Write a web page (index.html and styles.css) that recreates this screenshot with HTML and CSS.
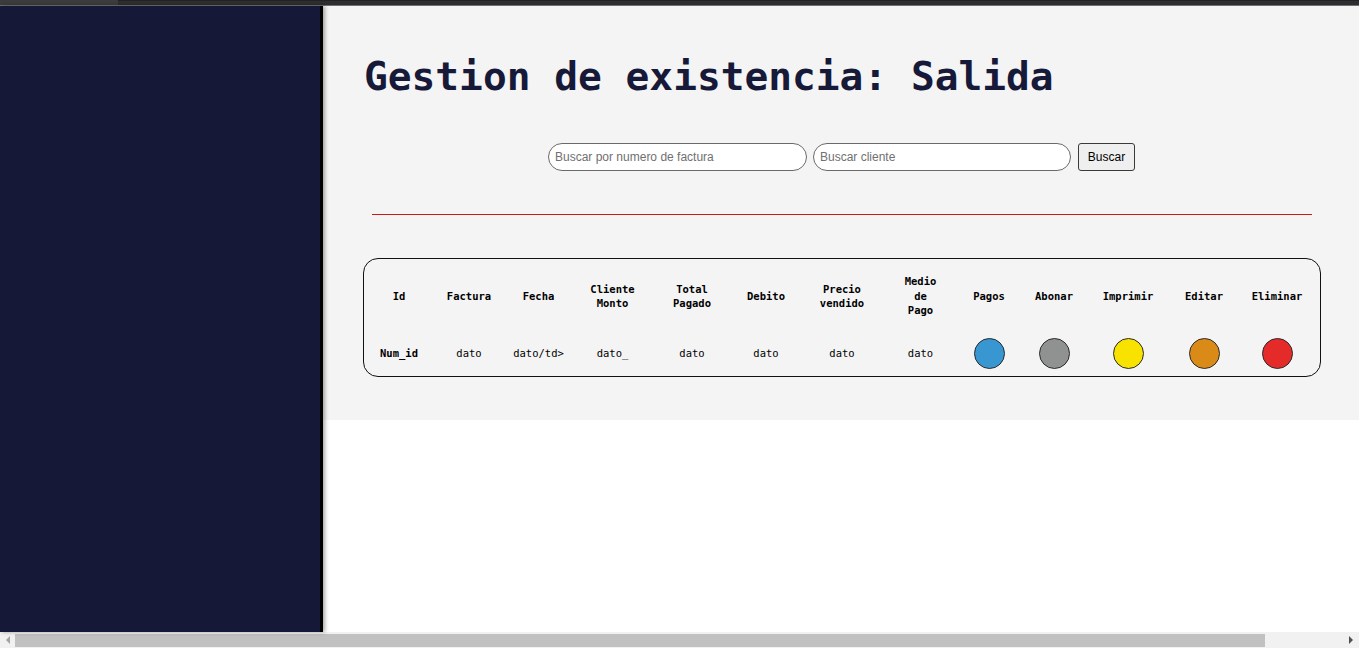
FILE: index.html
```html
<!DOCTYPE html>
<html lang="es">
<head>
<meta charset="utf-8">
<title>Gestion de existencia: Salida</title>
<link rel="stylesheet" href="styles.css">
</head>
<body>
<div class="window">
  <div class="topbar"><div class="topbar-tab"></div><div class="topbar-rest"></div></div>
  <div class="layout">
    <aside class="sidebar"></aside>
    <main class="main">
      <section class="panel">
        <h1 class="title">Gestion de existencia: Salida</h1>
        <form class="search">
          <input class="search-input" type="text" placeholder="Buscar por numero de factura">
          <input class="search-input search-input-b" type="text" placeholder="Buscar cliente">
          <button type="button" class="search-btn">Buscar</button>
        </form>
        <hr class="divider">
        <div class="table-box">
          <div class="grid">
            <div class="th">Id</div>
            <div class="th">Factura</div>
            <div class="th">Fecha</div>
            <div class="th">Cliente<br>Monto</div>
            <div class="th">Total<br>Pagado</div>
            <div class="th">Debito</div>
            <div class="th">Precio<br>vendido</div>
            <div class="th">Medio<br>de<br>Pago</div>
            <div class="th">Pagos</div>
            <div class="th">Abonar</div>
            <div class="th">Imprimir</div>
            <div class="th">Editar</div>
            <div class="th">Eliminar</div>

            <div class="td td-bold">Num_id</div>
            <div class="td">dato</div>
            <div class="td">dato/td&gt;</div>
            <div class="td">dato_</div>
            <div class="td">dato</div>
            <div class="td">dato</div>
            <div class="td">dato</div>
            <div class="td">dato</div>
            <div class="td"><span class="dot dot-blue"></span></div>
            <div class="td"><span class="dot dot-gray"></span></div>
            <div class="td"><span class="dot dot-yellow"></span></div>
            <div class="td"><span class="dot dot-orange"></span></div>
            <div class="td"><span class="dot dot-red"></span></div>
          </div>
        </div>
      </section>
    </main>
  </div>
  <div class="hscroll">
    <span class="arrow arrow-left"></span>
    <div class="track"><div class="thumb"></div></div>
    <span class="arrow arrow-right"></span>
  </div>
</div>
</body>
</html>
```
FILE: styles.css
```css
html, body {
  margin: 0;
  padding: 0;
  height: 648px;
  overflow: hidden;
  background: #ffffff;
}

.window {
  display: flex;
  flex-direction: column;
  height: 648px;
  width: 1359px;
}

.topbar {
  display: flex;
  height: 5px;
  border-bottom: 1px solid #707070;
  flex: 0 0 auto;
}
.topbar-tab {
  width: 118px;
  background: #3c3c3c;
}
.topbar-rest {
  flex: 1;
  background: #2e2e30;
  border-top: 1px solid #222;
}

.layout {
  flex: 1;
  display: flex;
  min-height: 0;
}

.sidebar {
  flex: 0 0 320px;
  background: #151937;
  border-right: 3px solid #000;
  box-shadow: 2px 0 4px rgba(0, 0, 0, 0.35);
  position: relative;
  z-index: 1;
}

.main {
  flex: 1;
  background: #ffffff;
}

.panel {
  background: #f4f4f4;
  padding: 47px 38px 43px 40px;
}

.title {
  margin: 0 0 0 1px;
  font-family: "DejaVu Sans Mono", "Liberation Mono", monospace;
  font-weight: bold;
  font-size: 39.5px;
  line-height: 46px;
  color: #161938;
}

.search {
  display: flex;
  align-items: center;
  margin: 44px 0 0 185px;
}

.search-input {
  box-sizing: border-box;
  width: 259px;
  height: 28px;
  border: 1px solid #6a6a6a;
  border-radius: 14px;
  background: #fff;
  padding: 0 6px;
  font-family: "Liberation Sans", Arial, sans-serif;
  font-size: 12px;
  color: #000;
  outline: none;
}
.search-input::placeholder {
  color: #707070;
}
.search-input-b {
  width: 258px;
  margin-left: 6px;
}

.search-btn {
  box-sizing: border-box;
  margin-left: 7px;
  width: 57px;
  height: 28px;
  padding: 0;
  border: 1px solid #3a3a3a;
  border-radius: 3px;
  background: #efefef;
  font-family: "Liberation Sans", Arial, sans-serif;
  font-size: 12px;
  color: #000;
}

.divider {
  margin: 43px 9px 0;
  border: 0;
  border-top: 1px solid #c91b1b;
  height: 0;
}

.table-box {
  margin-top: 43px;
  border: 1px solid #111;
  border-radius: 15px;
  padding: 15px 0 8px;
}

.grid {
  display: grid;
  grid-template-columns: 70px 70px 69px 79px 80px 68px 84px 73px 64px 66px 82px 70px 76px;
  grid-template-rows: 44px 30px;
  row-gap: 20px;
  font-family: "DejaVu Sans Mono", "Liberation Mono", monospace;
  font-size: 10.5px;
  line-height: 14.5px;
  color: #000;
}

.th, .td {
  display: flex;
  align-items: center;
  justify-content: center;
  text-align: center;
}
.th {
  font-weight: bold;
}
.td-bold {
  font-weight: bold;
}

.dot {
  box-sizing: border-box;
  width: 31px;
  height: 31px;
  border-radius: 50%;
  border: 1px solid #2b2b2b;
}
.dot-blue { background: #3897d0; }
.dot-gray { background: #8f9291; }
.dot-yellow { background: #f7e200; }
.dot-orange { background: #da8a17; }
.dot-red { background: #e52a2a; }

.hscroll {
  flex: 0 0 16px;
  display: flex;
  align-items: center;
  background: #f1f1f1;
}
.track {
  flex: 1;
  height: 13px;
}
.thumb {
  width: 1250px;
  height: 13px;
  background: #c1c1c1;
}
.arrow {
  flex: 0 0 15px;
  display: flex;
  align-items: center;
  justify-content: center;
}
.arrow-left::before {
  content: "";
  border-top: 4px solid transparent;
  border-bottom: 4px solid transparent;
  border-right: 4px solid #a3a3a3;
}
.arrow-right {
  flex-basis: 16px;
}
.arrow-right::before {
  content: "";
  border-top: 4px solid transparent;
  border-bottom: 4px solid transparent;
  border-left: 4px solid #505050;
}
```
